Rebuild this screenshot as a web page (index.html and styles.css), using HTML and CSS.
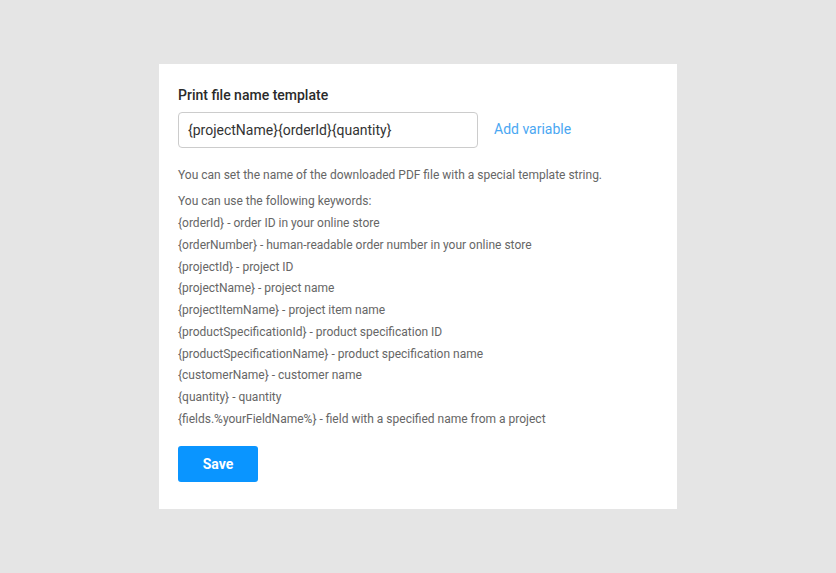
FILE: index.html
```html
<!DOCTYPE html>
<html lang="en">
<head>
<meta charset="utf-8">
<title>Print file name template</title>
<link rel="stylesheet" href="styles.css">
</head>
<body>
<main class="card">
  <label class="title" for="tpl">Print file name template</label>
  <div class="field-row">
    <input id="tpl" class="input" type="text" value="{projectName}{orderId}{quantity}">
    <a class="add-link" href="#">Add variable</a>
  </div>
  <p class="hint">You can set the name of the downloaded PDF file with a special template string.</p>
  <ul class="keywords">
    <li>You can use the following keywords:</li>
    <li>{orderId} - order ID in your online store</li>
    <li>{orderNumber} - human-readable order number in your online store</li>
    <li>{projectId} - project ID</li>
    <li>{projectName} - project name</li>
    <li>{projectItemName} - project item name</li>
    <li>{productSpecificationId} - product specification ID</li>
    <li>{productSpecificationName} - product specification name</li>
    <li>{customerName} - customer name</li>
    <li>{quantity} - quantity</li>
    <li>{fields.%yourFieldName%} - field with a specified name from a project</li>
  </ul>
  <button class="save" type="button">Save</button>
</main>
</body>
</html>
```

FILE: styles.css
```css
* { box-sizing: border-box; }
html, body { margin: 0; padding: 0; }
body {
  background: #e5e5e5;
  font-family: Roboto, "Liberation Sans", Arial, sans-serif;
  min-height: 100vh;
  display: flex;
  align-items: center;
  justify-content: center;
}
.card {
  width: 518px;
  background: #fff;
  padding: 21px 19px 27px 19px;
  display: flex;
  flex-direction: column;
  align-items: flex-start;
}
.title {
  font-size: 14px;
  line-height: 20px;
  font-weight: 500;
  color: #2b2b2b;
}
.field-row {
  margin-top: 7px;
  display: flex;
  align-items: center;
  gap: 16px;
}
.input {
  width: 300px;
  height: 36px;
  border: 1px solid #cccccc;
  border-radius: 4px;
  padding: 0 9px;
  font-family: inherit;
  font-size: 14px;
  color: #333;
  outline: none;
}
.add-link {
  font-size: 14px;
  line-height: 18px;
  margin-top: -2px;
  color: #4aa7f2;
  text-decoration: none;
}
.hint {
  margin: 16px 0 0 0;
  font-size: 12px;
  line-height: 22px;
  color: #666;
}
.keywords {
  list-style: none;
  margin: 5px 0 0 0;
  padding: 0;
  font-size: 12px;
  line-height: 21.8px;
  color: #666;
}
.save {
  margin-top: 15px;
  width: 80px;
  height: 36px;
  border: none;
  border-radius: 3px;
  background: #0a95ff;
  color: #fff;
  font-family: inherit;
  font-size: 14px;
  font-weight: 700;
  cursor: pointer;
}
```
